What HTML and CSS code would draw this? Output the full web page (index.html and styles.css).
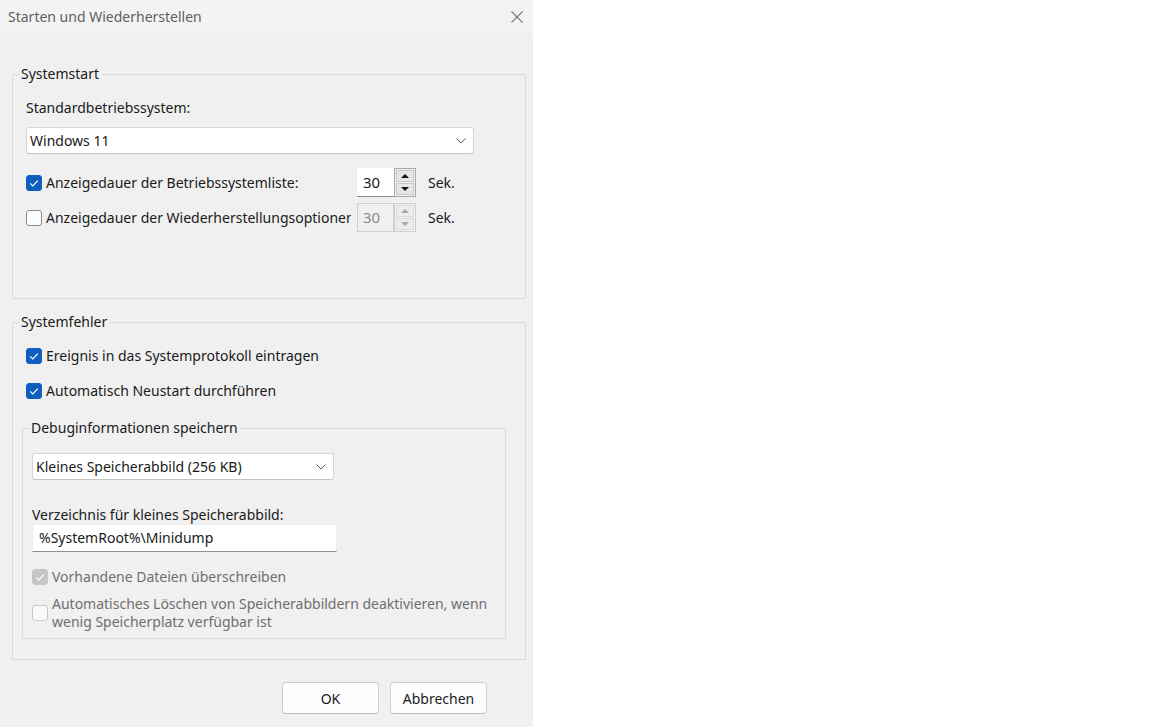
FILE: index.html
```html
<!DOCTYPE html>
<html lang="de">
<head>
<meta charset="UTF-8" />
<title>Starten und Wiederherstellen</title>
<link rel="stylesheet" href="styles.css">
</head>
<body>
<div class="dialog">
  <div class="titlebar">
    <span class="title">Starten und Wiederherstellen</span>
    <svg class="close" width="14" height="14" viewBox="0 0 14 14"><path d="M1.5 1.5L12.5 12.5M12.5 1.5L1.5 12.5" stroke="#7a7a7a" stroke-width="1.1" fill="none"/></svg>
  </div>

  <div class="content">
    <fieldset class="group group-start">
      <legend>Systemstart</legend>
      <div class="group-body">
        <div class="label">Standardbetriebssystem:</div>
        <div class="select select-os">
          <span>Windows 11</span>
          <svg width="10" height="6" viewBox="0 0 10 6"><path d="M0.5 0.5L5 5L9.5 0.5" stroke="#606060" fill="none"/></svg>
        </div>

        <div class="row timer-row first">
          <span class="check checked"><svg width="16" height="16" viewBox="0 0 16 16"><path d="M4.2 8.4L6.8 10.9L11.8 5.6" stroke="#fff" stroke-width="1.2" fill="none"/></svg></span>
          <span class="check-label fixed">Anzeigedauer der Betriebssystemliste:</span>
          <div class="spin">
            <span class="spin-value">30</span>
            <div class="spin-buttons">
              <span class="spin-btn"><i class="tri up"></i></span>
              <span class="spin-btn"><i class="tri down"></i></span>
            </div>
          </div>
          <span class="unit">Sek.</span>
        </div>

        <div class="row timer-row">
          <span class="check"></span>
          <span class="check-label fixed">Anzeigedauer der Wiederherstellungsoptionen:</span>
          <div class="spin disabled">
            <span class="spin-value">30</span>
            <div class="spin-buttons">
              <span class="spin-btn"><i class="tri up"></i></span>
              <span class="spin-btn"><i class="tri down"></i></span>
            </div>
          </div>
          <span class="unit">Sek.</span>
        </div>
      </div>
    </fieldset>

    <fieldset class="group group-errors">
      <legend>Systemfehler</legend>
      <div class="group-body errors-body">
        <div class="row check-row first">
          <span class="check checked"><svg width="16" height="16" viewBox="0 0 16 16"><path d="M4.2 8.4L6.8 10.9L11.8 5.6" stroke="#fff" stroke-width="1.2" fill="none"/></svg></span>
          <span class="check-label">Ereignis in das Systemprotokoll eintragen</span>
        </div>
        <div class="row check-row second">
          <span class="check checked"><svg width="16" height="16" viewBox="0 0 16 16"><path d="M4.2 8.4L6.8 10.9L11.8 5.6" stroke="#fff" stroke-width="1.2" fill="none"/></svg></span>
          <span class="check-label">Automatisch Neustart durchführen</span>
        </div>

        <fieldset class="group inner">
          <legend>Debuginformationen speichern</legend>
          <div class="inner-body">
            <div class="select select-dump">
              <span>Kleines Speicherabbild (256 KB)</span>
              <svg width="10" height="6" viewBox="0 0 10 6"><path d="M0.5 0.5L5 5L9.5 0.5" stroke="#606060" fill="none"/></svg>
            </div>
            <div class="label dir-label">Verzeichnis für kleines Speicherabbild:</div>
            <div class="textbox">%SystemRoot%\Minidump</div>

            <div class="row check-row overwrite">
              <span class="check checked disabled"><svg width="16" height="16" viewBox="0 0 16 16"><path d="M4.2 8.4L6.8 10.9L11.8 5.6" stroke="#fff" stroke-width="1.2" fill="none"/></svg></span>
              <span class="check-label muted">Vorhandene Dateien überschreiben</span>
            </div>
            <div class="row check-row autodelete">
              <span class="check disabled"></span>
              <span class="check-label muted">Automatisches Löschen von Speicherabbildern deaktivieren, wenn wenig Speicherplatz verfügbar ist</span>
            </div>
          </div>
        </fieldset>
      </div>
    </fieldset>

    <div class="buttons">
      <button class="btn">OK</button>
      <button class="btn">Abbrechen</button>
    </div>
  </div>
</div>
</body>
</html>
```

FILE: styles.css
```css
body {
  margin: 0; background: #fff; font-family: 'Noto Sans', 'Liberation Sans', sans-serif; font-size: 14px; color: #1a1a1a;
}

.dialog {
  width: 533px; height: 727px; background: #f0f0f0; display: flex; flex-direction: column;
}
.titlebar {
  height: 33px; background: #f3f3f3; display: flex; align-items: center; justify-content: space-between; padding: 0 9px 0 8px; flex-shrink: 0;
}
.title {
  color: #5f5f5f; font-size: 14px;
}
.content {
  padding: 32px 7px 0 12px;
}

/* group boxes */
.group {
  margin: 0; padding: 0; border: 1px solid #dadada; border-radius: 1px; min-width: 0;
}
.group legend {
  margin-left: 6px; padding: 0 2px; line-height: 18px; color: #1a1a1a;
}
.group-body {
  padding: 0 13px;
}
.group-start {
  padding-bottom: 66px;
}
.group-errors {
  margin-top: 14px; padding-bottom: 20px;
}
.errors-body {
  padding: 0 19px 0 9px;
}
.label {
  line-height: 18px; margin-top: 16px;
}

/* dropdowns */
.select {
  background: #fff; border: 1px solid #d6d6d6; border-bottom-color: #c4c4c4; border-radius: 3px; height: 27px; box-sizing: border-box;
  display: flex; align-items: center; justify-content: space-between; padding: 0 7px 0 3px;
}
.select-os {
  margin-top: 10px; width: 448px;
}
.select-dump {
  margin-top: 16px; width: 302px;
}

/* checkbox rows */
.row {
  display: flex; align-items: center;
}
.check {
  width: 16px; height: 16px; box-sizing: border-box; border: 1px solid #8a8a8a; border-radius: 3px; background: #fcfcfc; flex-shrink: 0;
  display: flex;
}
.check.checked {
  background: #0f5fc0; border-color: #0f5fc0;
}
.check.checked.disabled {
  background: #c6c6c6; border-color: #c6c6c6;
}
.check.disabled {
  border-color: #c8c8c8; background: #f8f8f8;
}
.check svg {
  margin: -1px;
}
.check-label {
  margin-left: 4px; line-height: 18px;
}
.check-label.fixed {
  width: 305px; white-space: nowrap; overflow: hidden;
}
.check-label.muted {
  color: #6e6e6e;
}
.timer-row {
  margin-top: 6px;
}
.timer-row.first {
  margin-top: 14px;
}
.check-row {
  height: 20px; margin-left: 4px;
}
.check-row.first {
  margin-top: 15px;
}
.check-row.second {
  margin-top: 15px;
}

/* spin box */
.spin {
  display: flex; margin-left: 6px; height: 29px;
}
.spin-value {
  width: 37px; box-sizing: border-box; background: #fff; border-bottom: 1px solid #8a8a8a; padding-left: 6px; line-height: 28px; font-size: 15px;
}
.spin-buttons {
  width: 22px; box-sizing: border-box; border: 1px solid #a9a9a9; display: flex; flex-direction: column; padding: 1px; gap: 1px; background: #f0f0f0;
}
.spin-btn {
  flex: 1; border: 1px solid #c9c9c9; background: #e6e6e6; display: flex; align-items: center; justify-content: center;
}
.tri {
  width: 0; height: 0; border-left: 4px solid transparent; border-right: 4px solid transparent;
}
.tri.up { border-bottom: 4px solid #111; }
.tri.down { border-top: 4px solid #111; }
.spin.disabled .spin-value {
  background: #f0f0f0; color: #8a8a8a; border: 1px solid #cfcfcf; line-height: 27px; padding-left: 5px;
}
.spin.disabled .spin-buttons { border-color: #cfcfcf; }
.spin.disabled .spin-btn { border-color: #dcdcdc; background: #ececec; }
.spin.disabled .tri.up { border-bottom-color: #a8a8a8; }
.spin.disabled .tri.down { border-top-color: #a8a8a8; }
.unit {
  margin-left: 12px;
}

/* debug box */
.inner {
  margin-top: 18px; padding-bottom: 7px;
}
.inner-body {
  padding: 0 9px;
}
.inner .check-row {
  margin-left: 0;
}
.dir-label {
  margin-top: 26px;
}
.textbox {
  margin-top: 0; width: 305px; height: 28px; box-sizing: border-box; background: #fff; border: 1px solid #ececec; border-bottom-color: #8f8f8f;
  padding-left: 6px; line-height: 26px;
}
.overwrite {
  margin-top: 15px;
}
.autodelete {
  height: auto; margin-top: 8px;
}

/* footer buttons */
.buttons {
  display: flex; justify-content: flex-end; gap: 11px; padding-right: 39px; margin-top: 22px;
}
.btn {
  width: 97px; height: 32px; background: #fdfdfd; border: 1px solid #d0d0d0; border-bottom-color: #bdbdbd; border-radius: 4px;
  font-family: inherit; font-size: 14px; color: #1a1a1a;
}
```
